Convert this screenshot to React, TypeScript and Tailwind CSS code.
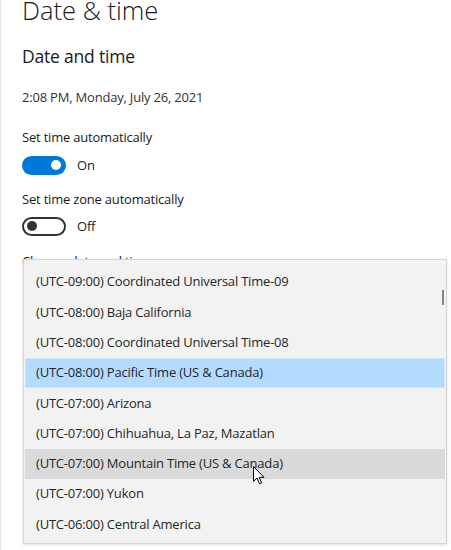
import React from "react";

const zones = [
  "(UTC-09:00) Coordinated Universal Time-09",
  "(UTC-08:00) Baja California",
  "(UTC-08:00) Coordinated Universal Time-08",
  "(UTC-08:00) Pacific Time (US & Canada)",
  "(UTC-07:00) Arizona",
  "(UTC-07:00) Chihuahua, La Paz, Mazatlan",
  "(UTC-07:00) Mountain Time (US & Canada)",
  "(UTC-07:00) Yukon",
  "(UTC-06:00) Central America",
];

const SELECTED = 3;
const HOVERED = 6;

const Toggle = ({ on }: { on: boolean }) =>
  on ? (
    <div className="w-[44px] h-[19px] rounded-full bg-[#0078d7] flex items-center justify-end pr-[5px]">
      <div className="w-[10px] h-[10px] rounded-full bg-white" />
    </div>
  ) : (
    <div className="w-[44px] h-[19px] rounded-full border-2 border-[#333333] flex items-center pl-[3px]">
      <div className="w-[10px] h-[10px] rounded-full bg-[#333333]" />
    </div>
  );

export default function App() {
  return (
    <div className="relative w-[451px] h-[550px] overflow-hidden bg-white border-l border-[#e6e6e6] font-['Open_Sans',sans-serif] text-[#1a1a1a] tracking-[-0.2px]">
      {/* Settings page */}
      <div className="pl-[21px] flex flex-col">
        <h1 className="mt-[-7px] h-[34px] text-[25.5px] font-light leading-[34px] tracking-normal">Date &amp; time</h1>
        <h2 className="mt-[15px] h-[28px] text-[17.5px] leading-[28px]">Date and time</h2>
        <div className="mt-[17px] h-[20px] text-[13px] leading-[20px] text-[#333]">2:08 PM, Monday, July 26, 2021</div>
        <div className="mt-[20px] h-[20px] text-[13px] leading-[20px]">Set time automatically</div>
        <div className="mt-[8px] h-[20px] flex items-center gap-[11px]">
          <Toggle on />
          <span className="text-[13px] leading-[20px]">On</span>
        </div>
        <div className="mt-[14px] h-[20px] text-[13px] leading-[20px]">Set time zone automatically</div>
        <div className="mt-[7px] h-[20px] flex items-center gap-[11px]">
          <Toggle on={false} />
          <span className="text-[13px] leading-[20px]">Off</span>
        </div>
        <div className="mt-[15px] h-[20px] text-[13px] leading-[20px]">Change date and time</div>
      </div>

      {/* Time zone dropdown */}
      <div className="absolute left-[22px] top-[259px] w-[424px] h-[285px] bg-[#f2f2f2] border border-[#d6d6d6] shadow-[0_1px_3px_rgba(0,0,0,0.12)] pt-[7px]">
        {zones.map((z, i) => (
          <div
            key={z}
            className={
              i === SELECTED
                ? "mx-[1px] h-[30.3px] flex items-center px-[10px] bg-[#b3dbff] border border-[#cce8ff] text-[13px] text-[#262626]"
                : i === HOVERED
                ? "mx-[1px] h-[30.3px] flex items-center px-[10px] bg-[#dadada] border border-transparent text-[13px] text-[#262626]"
                : "mx-[1px] h-[30.3px] flex items-center px-[10px] border border-transparent text-[13px] text-[#262626]"
            }
          >
            {z}
          </div>
        ))}
        <div className="absolute right-[2px] top-[30px] w-[2px] h-[15px] bg-[#858585]" />
      </div>

      {/* Mouse pointer */}
      <svg className="absolute left-[252px] top-[466px]" width="12" height="19" viewBox="0 0 12 19">
        <path d="M0.5 0.5 L0.5 15.5 L4 12 L6.5 17.8 L8.6 16.9 L6.2 11.3 L11 11.3 Z" fill="white" stroke="black" strokeWidth="1" strokeLinejoin="round" />
      </svg>
    </div>
  );
}
